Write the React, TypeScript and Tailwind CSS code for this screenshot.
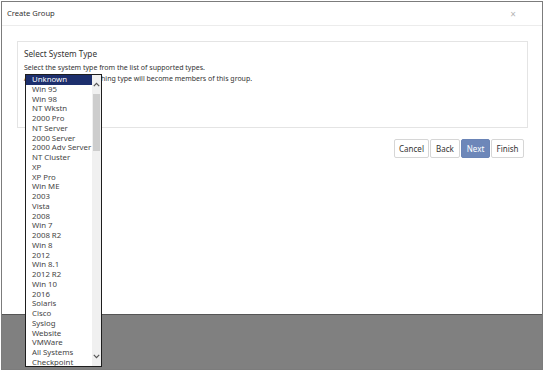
import React from 'react';

const systemTypes = [
  'Unknown', 'Win 95', 'Win 98', 'NT Wkstn', '2000 Pro', 'NT Server', '2000 Server',
  '2000 Adv Server', 'NT Cluster', 'XP', 'XP Pro', 'Win ME', '2003', 'Vista', '2008',
  'Win 7', '2008 R2', 'Win 8', '2012', 'Win 8.1', '2012 R2', 'Win 10', '2016', 'Solaris',
  'Cisco', 'Syslog', 'Website', 'VMWare', 'All Systems', 'Checkpoint',
];

const App: React.FC = () => {
  return (
    <div className="h-[372px] w-[545px] bg-white p-[1px] font-['Noto_Sans',sans-serif] text-[#333]">
      <div className="relative flex h-[369px] w-[542px] flex-col border border-[#7c7c7c]">
        {/* modal */}
        <div className="flex h-[312px] flex-col bg-white">
          <div className="flex h-[24px] items-center justify-between border-b border-[#ececec] pl-[5px] pr-[26px]">
            <span className="text-[7.6px]">Create Group</span>
            <span className="text-[10px] leading-none text-[#b5b5b5]">×</span>
          </div>

          <div className="ml-[15px] mt-[15px] h-[87px] w-[511px] border border-[#e4e4e4] pl-[6px] pt-[6px]">
            <div className="text-[8.2px] leading-[11px]">Select System Type</div>
            <div className="mt-[3px] text-[7px] leading-[11px]">
              <div>Select the system type from the list of supported types.</div>
              <div>All systems of this matching type will become members of this group.</div>
            </div>
          </div>

          <div className="mt-[11px] flex justify-end gap-[1px] pr-[18px] text-[8px]">
            <button className="h-[19px] w-[35px] rounded-[2px] border border-[#d6d6d6] bg-white">Cancel</button>
            <button className="h-[19px] w-[30px] rounded-[2px] border border-[#d6d6d6] bg-white">Back</button>
            <button className="h-[19px] w-[29px] rounded-[2px] border border-[#6a84b6] bg-[#6d87b9] text-white">Next</button>
            <button className="h-[19px] w-[33px] rounded-[2px] border border-[#d6d6d6] bg-white">Finish</button>
          </div>
        </div>

        {/* backdrop */}
        <div className="flex-1 border-t border-[#555] bg-[#808080]" />

        {/* open dropdown list */}
        <div className="absolute left-[23px] top-[72px] flex h-[293px] w-[77px] border border-[#1e1e1e] bg-white">
          <div className="h-full w-[66px] overflow-hidden text-[7.8px] leading-[9.75px]">
            {systemTypes.map((t, i) => (
              <div
                key={t}
                className={
                  i === 0
                    ? 'h-[9.75px] whitespace-nowrap bg-[#1d2f6d] pl-[6px] text-white'
                    : 'h-[9.75px] whitespace-nowrap pl-[6px] text-[#444]'
                }
              >
                {t}
              </div>
            ))}
          </div>
          <div className="flex h-full w-[9px] flex-col items-center bg-[#f0f0f0]">
            <div className="flex h-[19px] w-full items-center justify-center">
              <svg width="7" height="5" viewBox="0 0 7 5">
                <path d="M0.8 4.2 L3.5 1.4 L6.2 4.2" fill="none" stroke="#555" strokeWidth="1.2" />
              </svg>
            </div>
            <div className="h-[57px] w-[7px] bg-[#cdcdcd]" />
            <div className="flex-1" />
            <div className="flex h-[19px] w-full items-center justify-center">
              <svg width="7" height="5" viewBox="0 0 7 5">
                <path d="M0.8 0.8 L3.5 3.6 L6.2 0.8" fill="none" stroke="#555" strokeWidth="1.2" />
              </svg>
            </div>
          </div>
        </div>
      </div>
    </div>
  );
};

export default App;
